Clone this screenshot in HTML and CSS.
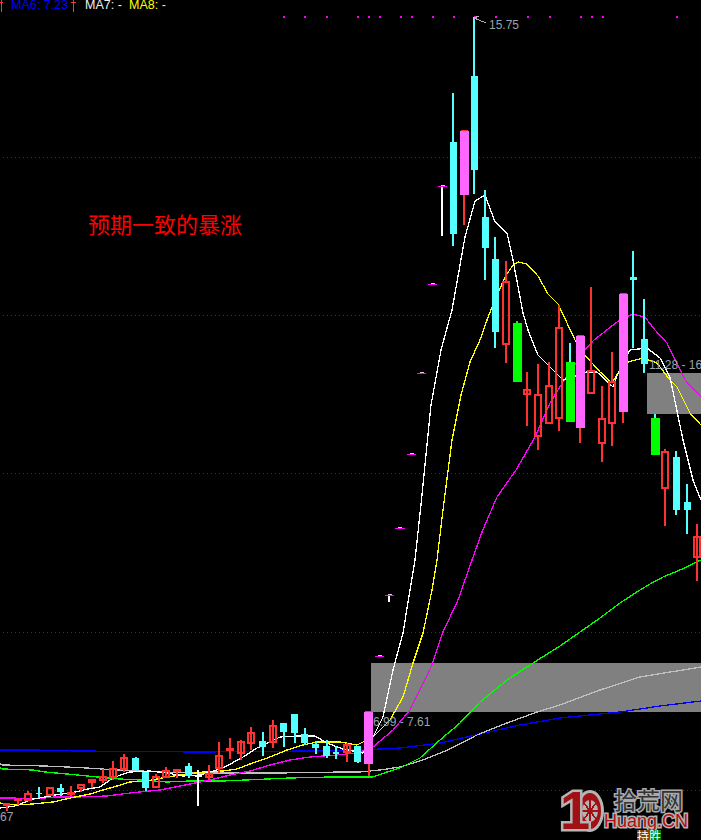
FILE: index.html
```html
<!DOCTYPE html>
<html lang="zh">
<head>
<meta charset="utf-8">
<title>K线图</title>
<link rel="stylesheet" href="styles.css">
</head>
<body>
<main class="chart">
  <svg class="plot" width="701" height="840" viewBox="0 0 701 840">
    <g class="grid">
      <path d="M3 157.5H701M3 315.5H701M3 473.5H701M3 632.5H701M3 790.5H701"/>
    </g>
    <g class="zones">
      <rect x="647" y="373" width="54" height="41"/>
      <rect x="371" y="663" width="330" height="49"/>
    </g>
    <g class="signals">
      <rect x="283" y="16" width="2" height="2"/><rect x="304" y="16" width="2" height="2"/><rect x="326" y="16" width="2" height="2"/>
      <rect x="357" y="16" width="2" height="2"/><rect x="368" y="16" width="2" height="2"/><rect x="379" y="16" width="2" height="2"/>
      <rect x="400" y="16" width="2" height="2"/><rect x="411" y="16" width="2" height="2"/><rect x="432" y="16" width="2" height="2"/>
      <rect x="453" y="16" width="2" height="2"/><rect x="474" y="16" width="2" height="2"/><rect x="495" y="16" width="2" height="2"/>
      <rect x="527" y="16" width="2" height="2"/><rect x="549" y="16" width="2" height="2"/><rect x="580" y="16" width="2" height="2"/>
      <rect x="591" y="16" width="2" height="2"/><rect x="602" y="16" width="2" height="2"/><rect x="676" y="16" width="2" height="2"/>
    </g>
    <g class="lines">
      <polyline class="l-blue" points="0,750 33,750 77,751 200,752 310,751 360,750 400,748 440,743 480,734 520,725 560,718 620,712 660,706 701,701"/>
      <polyline class="l-grey" points="0,764 3,765 45,766 67,767 87,768 117,770 140,771 190,773 278,773 343,772 360,772 380,770 400,767 423,760 450,749 477,735 507,723 537,712 560,705 600,690 640,677 701,667"/>
      <polyline class="l-green" points="0,768 3,769 33,770 45,772 67,774 87,776 120,779 140,780 167,782 190,781 223,781 290,778 330,777 373,777 387,772 400,768 420,758 440,740 460,723 480,702 507,680 533,663 560,646 600,618 620,603 640,590 650,584 663,577 680,570 701,560"/>
      <polyline class="l-magenta" points="0,798 13,798 33,799 55,797 77,797 107,796 130,793 160,790 190,784 210,780 230,775 250,771 270,765 290,760 310,757 337,755 357,753 373,747 393,730 410,710 432,665 443,632 458,600 472,560 482,532 497,497 516,470 535,437 550,403 563,382 585,350 594,340 617,322 632,314 645,317 655,330 667,343 685,380 701,397"/>
      <polyline class="l-yellow" points="0,803 17,805 33,804 53,802 75,797 90,794 103,790 117,786 130,782 147,781 167,777 187,774 203,772 223,771 237,769 250,764 270,757 287,750 303,745 317,742 340,742 357,745 373,737 390,720 403,697 413,663 423,633 432,590 437,560 443,510 452,440 461,395 470,362 480,340 487,320 495,300 505,277 513,265 518,262 527,264 538,276 548,294 558,304 567,323 575,340 585,355 600,372 612,383 618,373 628,362 643,358 657,363 670,380 677,387 690,413 701,425"/>
      <polyline class="l-white" points="0,808 15,806 33,799 45,797 55,795 75,792 88,789 100,787 110,780 120,775 130,772 150,771 167,773 183,776 200,775 223,768 243,757 257,748 270,742 280,737 297,736 315,736 327,743 343,749 363,753 373,737 383,717 393,670 403,633 410,590 415,560 422,495 431,405 441,350 452,310 465,237 475,201 485,195 495,222 507,233 513,260 523,313 528,330 538,355 563,380 587,372 597,372 613,387 618,373 630,350 647,348 660,358 670,377 683,440 693,480 701,500"/>
    </g>
    <path class="c-red" d="M6 803h2v8h-2zM17 798h2v7h-2zM27 791h2v3h-2zM70 786h2v10h-2zM80 788h2v4h-2zM91 782h2v6h-2zM102 769h2v14h-2zM112 761h2v19h-2zM123 754h2v18h-2zM155 774h2v3h-2zM165 767h2v11h-2zM176 771h2v7h-2zM208 765h2v15h-2zM218 742h2v31h-2zM229 738h2v21h-2zM240 740h2v20h-2zM250 727h2v23h-2zM272 720h2v28h-2zM346 743h2v19h-2zM368 764h2v12h-2zM505 261h2v21h-2zM505 345h2v18h-2zM526 372h2v54h-2zM537 364h2v31h-2zM537 437h2v13h-2zM548 362h2v24h-2zM558 305h2v23h-2zM558 419h2v12h-2zM463 195h2v30h-2zM579 428h2v15h-2zM590 287h2v84h-2zM601 386h2v33h-2zM601 444h2v18h-2zM611 352h2v30h-2zM611 424h2v22h-2zM622 412h2v11h-2zM664 449h2v3h-2zM664 489h2v37h-2zM696 524h2v57h-2zM3 803h7v3h-7zM14 799h8v2h-8zM67 792h8v3h-8zM173 769h8v3h-8zM226 748h8v3h-8zM461 130h7v1h-7zM365 711h7v1h-7zM577 335h7v1h-7zM620 293h7v1h-7z"/>
    <path class="c-hollow" d="M25 794H31V800H25zM47 788H53V795H47zM78 785H84V788H78zM89 780H95V782H89zM100 777H106V780H100zM110 769H116V777H110zM121 758H127V769H121zM153 777H159V787H153zM163 771H169V777H163zM206 774H212V777H206zM216 756H222V768H216zM238 742H244V753H238zM248 733H254V743H248zM270 726H276V742H270zM344 745H350V752H344zM503 282H509V344H503zM524 390H530V394H524zM535 395H541V436H535zM546 386H552V423H546zM556 328H562V418H556zM588 371H594V393H588zM599 419H605V443H599zM609 382H615V423H609zM662 452H668V488H662zM694 537H700V557H694z"/>
    <path class="c-cyan" d="M38 787h2v11h-2zM36 793h6v1h-6zM57 788h7v4h-7zM60 784h2v12h-2zM132 758h7v12h-7zM135 757h2v14h-2zM142 772h7v16h-7zM145 788h2v3h-2zM185 766h7v10h-7zM188 763h2v15h-2zM259 741h7v6h-7zM262 732h2v24h-2zM280 723h7v9h-7zM283 732h2v15h-2zM291 714h7v19h-7zM294 733h2v10h-2zM301 734h7v9h-7zM304 728h2v17h-2zM312 744h7v4h-7zM315 741h2v13h-2zM323 746h7v10h-7zM326 740h2v18h-2zM333 752h6v2h-6zM335 746h2v13h-2zM354 746h7v16h-7zM357 762h2v1h-2zM450 142h7v92h-7zM452 93h2v153h-2zM471 76h7v94h-7zM473 17h2v177h-2zM482 217h7v31h-7zM484 190h2v90h-2zM492 259h7v73h-7zM494 237h2v111h-2zM630 277h7v3h-7zM632 251h2v97h-2zM641 339h7v25h-7zM643 299h2v74h-2zM673 457h7v53h-7zM675 451h2v64h-2zM684 502h7v8h-7zM686 484h2v50h-2zM654 414h2v4h-2zM569 343h2v19h-2z"/>
    <path class="c-green" d="M513 323h9v59h-9zM516 321h2v2h-2zM566 362h9v60h-9zM651 418h9v37h-9z"/>
    <path class="c-magenta" d="M364 712h9v52h-9zM460 131h9v64h-9zM576 336h9v92h-9zM619 294h9v118h-9z"/>
    <path class="c-white" d="M197 770h2v36h-2zM195 775h7v2h-7zM441 187h2v49h-2zM388 596h2v6h-2z"/>
    <path class="cap-top" d="M388 594h4v1h-4zM378 655h4v1h-4zM398 527h4v1h-4zM410 453h4v1h-4zM420 372h4v1h-4zM431 283h4v1h-4zM441 185h4v1h-4z"/>
    <path class="cap-base" d="M385 595h9v1h-9zM375 656h9v1h-9zM395 528h10v1h-10zM407 454h9v1h-9zM417 373h9v1h-9zM428 284h9v1h-9zM438 186h9v1h-9z"/>
    <path class="pointer" d="M474 18L486 23M474 18L479 16M474 18L479 20"/>
    <path class="arrow" d="M0 2.500h3M1.500 0V12M71 2.500h5M73.500 0V12"/>
    <g class="gear">
      <ellipse class="gear-ring" cx="590" cy="811" rx="12.500" ry="19.500"/>
      <ellipse class="gear-disc" cx="590" cy="811" rx="8" ry="11"/>
      <path class="gear-slots" d="M590 800v22M582 811h16M584 803l12 16M596 803l-12 16"/>
      <circle class="gear-hub" cx="590" cy="811" r="3"/>
    </g>
  </svg>

  <div class="legend">
    <span class="ma6">MA6: 7.23</span>
    <span class="ma7">MA7: -</span>
    <span class="ma8">MA8: -</span>
  </div>
  <div class="note">预期一致的暴涨</div>
  <div class="tag tag-high">15.75</div>
  <div class="tag tag-zone-top">11.28 - 16</div>
  <div class="tag tag-zone-low">6.99 - 7.61</div>
  <div class="tag tag-low">67</div>
  <div class="mark">
    <span class="mark-one">1</span>
    <span class="mark-cn">拾荒网</span>
    <span class="mark-en">Huang.CN</span>
  </div>
  <div class="stamp"><span class="stamp-a">持</span><span class="stamp-b">胜</span></div>
</main>
</body>
</html>
```
FILE: styles.css
```css
html, body {
  margin: 0;
  padding: 0;
  background: #000;
  height: 100%;
  overflow: hidden;
}

.chart {
  position: relative;
  width: 701px;
  height: 840px;
  overflow: hidden;
  background: #000;
  font-family: "Liberation Sans", Arial, sans-serif;
}

.plot {
  position: absolute;
  left: 0;
  top: 0;
  display: block;
}

.plot path,
.plot rect,
.plot polyline {
  shape-rendering: crispEdges;
}

.grid path {
  fill: none;
  stroke: #7a1a1a;
  stroke-width: 1;
  stroke-dasharray: 1 3;
}

.zones rect { fill: #808080; }
.signals rect { fill: #ff00ff; }

.lines polyline {
  fill: none;
  stroke-width: 1.300;
}
.l-blue { stroke: #0000ff; }
.l-grey { stroke: #c0c0c0; }
.l-green { stroke: #00ff00; }
.l-magenta { stroke: #ff00ff; }
.l-yellow { stroke: #ffff00; }
.l-white { stroke: #ffffff; }

.c-red { fill: #ff3232; }
.c-hollow { fill: none; stroke: #ff3232; stroke-width: 2; }
.c-cyan { fill: #54ffff; }
.c-green { fill: #00ff00; }
.c-magenta { fill: #ff66ff; }
.c-white { fill: #ffffff; }
.cap-top { fill: #ffb4ff; }
.cap-base { fill: #ff00ff; }
.pointer { fill: none; stroke: #b0b0b0; stroke-width: 1; }
.arrow { fill: none; stroke: #ff3232; stroke-width: 1; }

.gear-ring { fill: #a01015; stroke: #b4b4b4; stroke-width: 3; }
.gear-disc { fill: #b4b4b4; }
.gear-slots { fill: none; stroke: #a01015; stroke-width: 1.500; shape-rendering: auto; }
.gear-hub { fill: #a01015; }

.legend {
  position: absolute;
  left: 11px;
  top: -2px;
  font-size: 12.500px;
  line-height: 14px;
  white-space: nowrap;
}
.legend span { position: absolute; top: 0; }
.ma6 { left: 0; color: #0000ff; }
.ma7 { left: 74px; color: #f0f0f0; }
.ma8 { left: 118px; color: #ffff00; }

.note {
  position: absolute;
  left: 88px;
  top: 208px;
  font-family: "Noto Sans CJK SC", sans-serif;
  font-size: 22px;
  line-height: 30px;
  color: #ff0000;
  white-space: nowrap;
}

.tag {
  position: absolute;
  font-size: 12px;
  line-height: 14px;
  color: #98a4ae;
  white-space: nowrap;
}
.tag-high { left: 489px; top: 18px; }
.tag-zone-top { left: 649px; top: 358px; }
.tag-zone-low { left: 373px; top: 715px; }
.tag-low { left: 0; top: 810px; }

.mark-one,
.mark-cn,
.mark-en {
  position: absolute;
  white-space: nowrap;
  paint-order: stroke fill;
}
.mark-one {
  left: 560px;
  top: 785px;
  font-size: 54px;
  line-height: 50px;
  font-weight: 700;
  color: #a01015;
  -webkit-text-stroke: 5px #b4b4b4;
}
.mark-cn {
  left: 614px;
  top: 787px;
  font-family: "Noto Sans CJK SC", sans-serif;
  font-size: 23px;
  line-height: 25px;
  color: #333;
  -webkit-text-stroke: 3px #aaa;
}
.mark-en {
  left: 604px;
  top: 812px;
  font-size: 18px;
  line-height: 18px;
  color: #b01015;
  -webkit-text-stroke: 3px #b4b4b4;
}

.stamp {
  position: absolute;
  left: 637px;
  top: 830px;
  display: flex;
  font-family: "Noto Sans CJK SC", sans-serif;
  font-size: 12px;
  line-height: 12px;
  color: #fff;
}
.stamp-a { background: #804000; }
.stamp-b { background: #008000; }
```
